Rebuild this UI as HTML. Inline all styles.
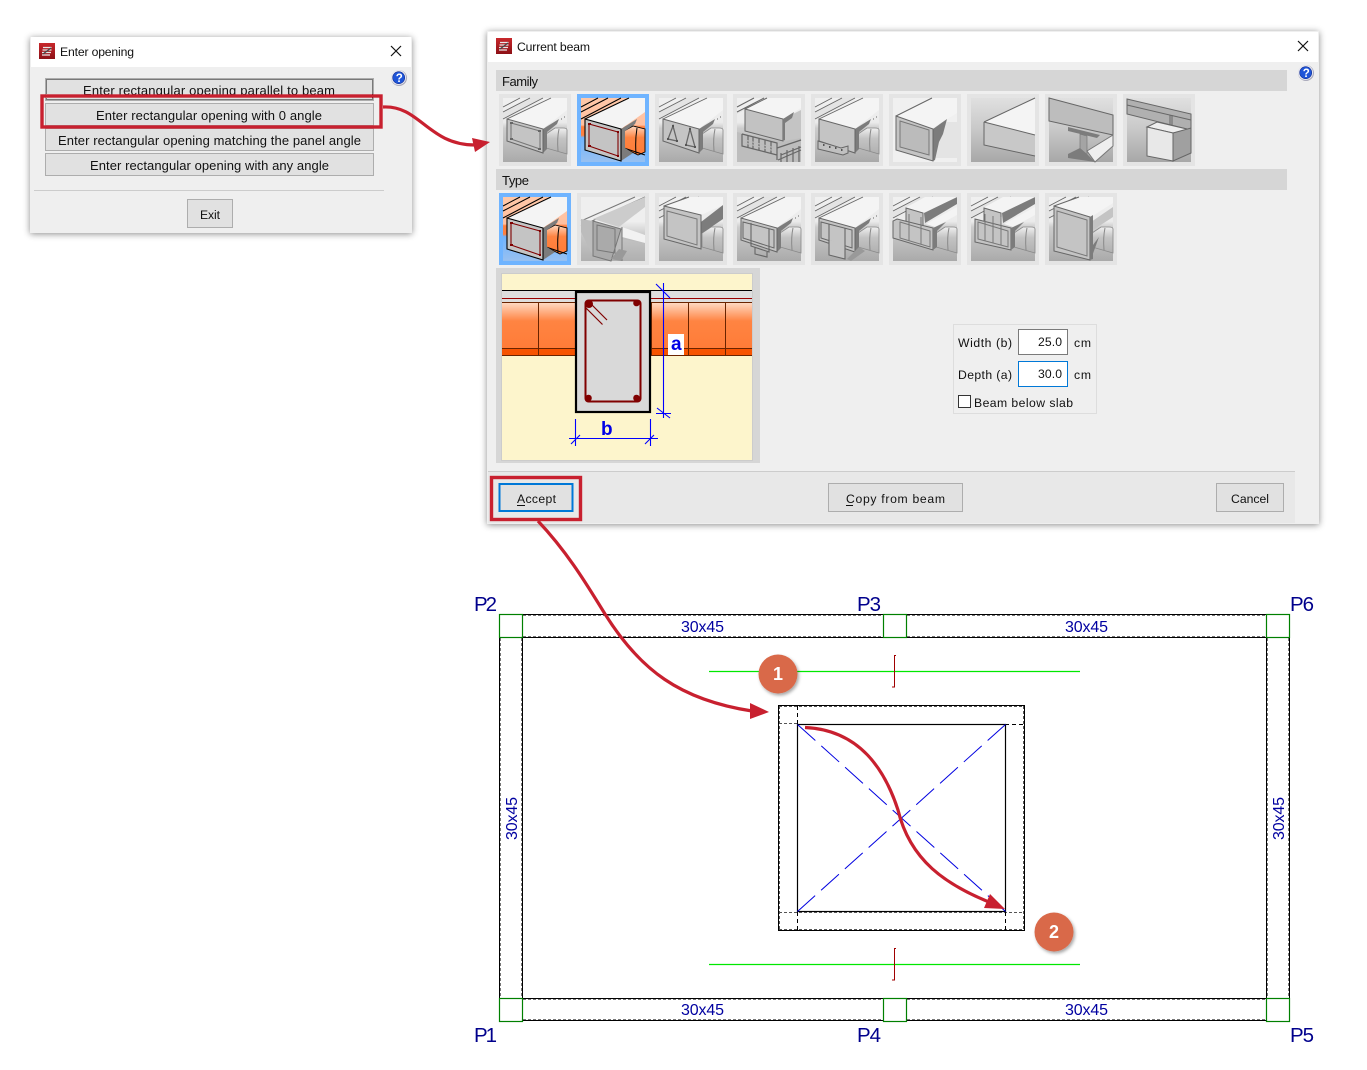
<!DOCTYPE html>
<html><head><meta charset="utf-8"><title>Opening</title>
<style>
html,body{margin:0;padding:0;background:#fff;width:1367px;height:1070px;overflow:hidden}
svg{display:block}
text{font-family:"Liberation Sans",sans-serif;font-size:13px;fill:#111}
.s{font-size:12.2px}
.p{font-size:20.5px;fill:#00008c}
.d{font-size:16px;fill:#0000a0}
</style></head><body>
<svg width="1367" height="1070" viewBox="0 0 1367 1070" xmlns="http://www.w3.org/2000/svg">
<defs>
<filter id="sh" x="-5%" y="-8%" width="110%" height="116%"><feDropShadow dx="0" dy="1" stdDeviation="3.5" flood-color="#000" flood-opacity=".45"/></filter>
<filter id="cs" x="-30%" y="-30%" width="170%" height="170%"><feDropShadow dx="1.5" dy="2" stdDeviation="1.5" flood-color="#000" flood-opacity=".35"/></filter>
<linearGradient id="bg" x1="0" y1="0" x2="0" y2="1"><stop offset="0" stop-color="#f0f0f0"/><stop offset=".38" stop-color="#ebebeb"/><stop offset=".47" stop-color="#cdcdcd"/><stop offset="1" stop-color="#aaa"/></linearGradient>
<linearGradient id="bg2" x1="0" y1="0" x2="0" y2="1"><stop offset="0" stop-color="#e0e0e0"/><stop offset=".5" stop-color="#c8c8c8"/><stop offset="1" stop-color="#a8a8a8"/></linearGradient>
<linearGradient id="bk" x1="0" y1="0" x2="0" y2="1"><stop offset="0" stop-color="#f0f0f0"/><stop offset=".4" stop-color="#c4c4c4"/><stop offset="1" stop-color="#b0b0b0"/></linearGradient>
<linearGradient id="sel" x1="0" y1="0" x2="0" y2="1"><stop offset="0" stop-color="#ffc8a8"/><stop offset=".42" stop-color="#ffc0a0"/><stop offset=".45" stop-color="#ff8040"/><stop offset=".58" stop-color="#ff8040"/><stop offset=".62" stop-color="#70b4ff"/><stop offset="1" stop-color="#98c0f0"/></linearGradient>
<linearGradient id="org" x1="0" y1="0" x2="0" y2="1"><stop offset="0" stop-color="#ffd8c0"/><stop offset=".4" stop-color="#ff8442"/><stop offset="1" stop-color="#ff7c38"/></linearGradient>
<linearGradient id="ic" x1="0" y1="0" x2="0" y2="1"><stop offset="0" stop-color="#c8282c"/><stop offset="1" stop-color="#8c1016"/></linearGradient>

<g id="icon"><rect width="16" height="16" fill="url(#ic)"/><path d="M4 4.5h8.5M3.5 7h9M3 9.5h9M3 12h8" stroke="#e8e8e8" stroke-width="1.2" fill="none"/><path d="M4 11l8-6" stroke="#444" stroke-width="1.2"/></g>
<g id="help"><circle r="8" fill="#aab" /><circle cx="-.5" cy="-.5" r="7.5" fill="#e8e8f0"/><circle cx="-.3" cy="-.3" r="6" fill="#1f55d8" stroke="#0c2a90" stroke-width=".6"/><text x="-3.3" y="4" style="font-size:11.5px;font-weight:700;fill:#fff">?</text></g>
<g id="xx"><path d="M-5 -5L5 5M5 -5L-5 5" stroke="#111" stroke-width="1.2"/></g>

<g id="base" stroke="#666" fill="none">
<rect width="64" height="64" fill="url(#bg)" stroke="none"/>
<polygon points="0,14 27,0 40,0 0,21" fill="#e4e4e4" stroke="none"/>
<path d="M0 14L27 0M0 9L17 0M0 21L40 0" stroke-width=".9"/>
<path d="M43,36 L52,30 H60 Q64,30 64,32 V56 L43,50Z" fill="url(#bk)" stroke="#888" stroke-width=".8"/>
<path d="M56,31 Q54,40 55,53" stroke="#888"/>
</g>
<g id="beamA" stroke="#666" fill="none">
<polygon points="40,31 56,21 54,26 44,34 44,51 40,55" fill="#7c7c7c" stroke="none"/>
<polygon points="4,21 48,0 64,0 64,12 40,31" fill="#f4f4f4" stroke="none"/>
<path d="M4,21L48,0M58,21h1M61,19h1" stroke-width=".9"/>
<polygon points="4,21 40,31 40,55 4,43" fill="#c4c4c4" stroke-width="1"/>
</g>
<g id="t1"><use href="#base"/><use href="#beamA"/><polygon points="8,25 37,33 37,51 8,41" fill="none" stroke="#777" stroke-width="1.1"/><path d="M7,25h3M35,33h3M7,41h3M35,51h3" stroke="#666" stroke-width="2"/></g>
<g id="t3"><use href="#base"/><use href="#beamA"/><path d="M9,41L14,28L18,43ZM27,47L31,31L36,49Z" fill="none" stroke="#666" stroke-width="1.3"/><path d="M8,41h2M17,43h2M26,47h2M35,49h2M13,28h2M30,31h2" stroke="#555" stroke-width="2"/></g>
<g id="t4"><rect width="64" height="64" fill="url(#bg)"/><polygon points="0,14 27,0 30,0 0,16" fill="#e4e4e4"/><path d="M0 14L27 0M0 9L17 0" stroke="#666" fill="none"/><polygon points="0,34 46,44 64,40 64,64 0,64" fill="#bdbdbd"/><polygon points="8,11 30,0 64,0 64,10 46,21" fill="#f4f4f4"/><path d="M8,11L30,0" stroke="#666"/><polygon points="8,11 46,21 46,43 8,33" fill="#c2c2c2" stroke="#666"/><polygon points="46,21 64,12 64,40 46,43" fill="#c4c4c4"/><polygon points="46,21 57,14 55,20 48,25 48,42 46,43" fill="#7c7c7c"/><path d="M5,36L40,45V62M5,36V48L40,57M11,38V50M16,39V51M22,40V52M28,42V54M34,44V56M40,50L64,42M41,62L64,52M44,55V64M50,52V64M56,50V64M62,48V64M44,57L64,49" stroke="#666" stroke-width="1.2" fill="none"/><path d="M8,42L38,50M8,45L38,53" stroke="#bbb"/></g>
<g id="t5"><use href="#base"/><use href="#beamA"/><polygon points="3,43 26,50 33,48 33,55 28,57 3,51" fill="#c0c0c0" stroke="#666"/><path d="M8,47h1.500M14,49h1.500M20,50h1.500M26,52h1.500" stroke="#555" stroke-width="2"/></g>
<g id="t6"><rect width="64" height="64" fill="#f0f0f0"/><path d="M46,24h18v36H42Z" fill="#e4e4e4"/><polygon points="3,18 39,0 64,0 64,15 38,31" fill="#f4f4f4"/><path d="M3,18L39,0" stroke="#666"/><polygon points="40,31 54,21 50,36 46,44 42,62 40,63" fill="#7c7c7c"/><polygon points="3,18 40,31 40,63 3,52" fill="#c4c4c4" stroke="#666"/><polygon points="7,23 36,32 36,57 7,49" fill="#bbb" stroke="#777"/></g>
<g id="t7"><rect width="64" height="64" fill="url(#bg2)"/><polygon points="13,24 64,0 64,37" fill="#f4f4f4"/><polygon points="13,24 64,37 64,58 13,47" fill="#c8c8c8"/><path d="M13,24L64,0M13,24L64,37M13,24V47L64,58" stroke="#666" fill="none"/></g>
<g id="t8"><rect width="64" height="64" fill="url(#bg2)"/><polygon points="0,0 64,17 64,37 0,23" fill="#bdbdbd" stroke="#666"/><polygon points="19,29 51,37 48,40 19,33" fill="#7c7c7c"/><polygon points="31,36 38,38 38,58 31,58" fill="#a4a4a4" stroke="#777" stroke-width=".7"/><polygon points="38,53 64,37 64,48 46,64" fill="#eee" stroke="#777"/><polygon points="19,56 31,50 38,56 46,64 19,60" fill="#7c7c7c"/></g>
<g id="t9"><rect width="64" height="64" fill="url(#bg2)"/><polygon points="0,1 64,16 64,32 0,16" fill="#b0b0b0" stroke="#666"/><path d="M0,7L64,22M43,17V30M45,17V30" stroke="#666" fill="none"/><polygon points="20,29 30,24 64,32 46,35" fill="#eee" stroke="#666"/><polygon points="20,29 46,35 46,63 20,58" fill="#e8e8e8" stroke="#666"/><polygon points="46,35 64,30 64,55 46,63" fill="#a0a0a0" stroke="#666"/></g>
<g id="sel1"><rect width="64" height="64" fill="url(#sel)"/><path d="M43,33 L52,28 L64,31 V54 L57,57 L43,50Z" fill="url(#org)" stroke="#000" stroke-width=".9"/><path d="M56,30Q54,42 55,56M43,50L64,57" stroke="#000" fill="none"/><path d="M0 14L27 0M0 9L17 0M0 21L40 0" stroke="#000"/><polygon points="40,31 56,21 54,26 44,33 44,50 52,55 40,63" fill="#7c7c7c"/><polygon points="4,21 48,0 64,0 64,14 40,31" fill="#f4f4f4"/><path d="M4,21L48,0" stroke="#000"/><polygon points="4,21 40,31 40,63 4,52" fill="#c4c4c4" stroke="#000" stroke-width="1.1"/><polygon points="8,26 37,34 37,58 8,48" fill="none" stroke="#800000" stroke-width="1.1"/><path d="M7,26h3M36,34h2M7,48h3M36,58h2" stroke="#800000" stroke-width="2"/></g>
<g id="b2"><rect width="64" height="64" fill="#efefef"/><rect y="24" width="64" height="40" fill="url(#bk)"/><path d="M0 24L54 0M0 29L64 0" stroke="#777"/><polygon points="12,22 64,0 64,10 38,30" fill="#ccc"/><polygon points="0,22 12,24 40,32 64,38 64,46 40,42 40,60 12,59 0,35" fill="#bcbcbc"/><polygon points="12,24 40,32 30,64 12,59" fill="#aaa" stroke="#777"/><polygon points="41,30 64,38 64,46 41,40" fill="#f2f2f2"/><path d="M41,30V64M16,28l18,4v24l-18,-3z" stroke="#777" fill="none"/><polygon points="30,62 38,52 46,54 40,64" fill="#999"/></g>
<g id="b3"><use href="#base"/><polygon points="42,25 64,8 64,22 42,37" fill="#7c7c7c"/><polygon points="5,9 30,0 64,0 64,8 42,18" fill="#f4f4f4"/><path d="M5,9L30,0" stroke="#666"/><polygon points="5,9 42,18 42,52 5,42" fill="#c4c4c4" stroke="#666"/><polygon points="8,14 38,22 38,48 8,39" fill="none" stroke="#777"/></g>
<g id="b4"><use href="#base"/><use href="#beamA"/><polygon points="6,25 37,33 37,51 6,41" fill="#c4c4c4" stroke="#666"/><path d="M14,26V49L32,55V32M18,50V57L30,60V55" stroke="#666" fill="none" stroke-width="1.1"/></g>
<g id="b5"><use href="#base"/><use href="#beamA"/><polygon points="6,25 37,33 37,51 6,41" fill="#c4c4c4" stroke="#666"/><path d="M14,27V44M30,31V48M14,43V58L30,62V47" stroke="#666" fill="#c4c4c4" stroke-width="1.1"/><polygon points="32,62 44,50 50,54 36,64" fill="#999"/></g>
<g id="b6"><use href="#base"/><polygon points="31,16 64,0 64,7 32,26" fill="#7c7c7c"/><polygon points="12,11 32,0 64,0 30,16" fill="#f4f4f4"/><polygon points="33,27 64,10 64,18 42,30" fill="#f4f4f4"/><polygon points="13,11 30,16 30,30 13,26" fill="#c4c4c4" stroke="#666"/><polygon points="4,22 40,31 40,53 0,41 0,24" fill="#c4c4c4" stroke="#666"/><path d="M7,25L37,34V50L7,41ZM16,17V44M28,20V47" stroke="#777" fill="none"/><polygon points="40,31 53,25 44,34 44,50 40,53" fill="#7c7c7c"/></g>
<g id="b7"><use href="#base"/><polygon points="31,16 64,0 64,7 32,26" fill="#7c7c7c"/><polygon points="12,11 32,0 64,0 30,16" fill="#f4f4f4"/><polygon points="33,27 64,10 64,18 42,30" fill="#f4f4f4"/><polygon points="13,11 30,16 30,30 13,26" fill="#c4c4c4" stroke="#666"/><polygon points="4,22 40,31 40,53 4,45" fill="#c4c4c4" stroke="#666"/><path d="M7,25L37,34V50L7,42ZM14,17V44M22,19V46M30,20V48" stroke="#777" fill="none"/><polygon points="40,31 53,25 44,34 44,50 40,53" fill="#7c7c7c"/></g>
<g id="b8"><use href="#base"/><polygon points="42,25 64,10 64,20 44,33 42,62" fill="#c4c4c4"/><polygon points="44,48 50,40 42,62" fill="#7c7c7c"/><polygon points="5,9 30,0 64,0 64,6 42,20" fill="#f4f4f4"/><path d="M5,9L30,0" stroke="#666"/><polygon points="5,9 41,20 41,63 5,54" fill="#c4c4c4" stroke="#666"/><polygon points="8,14 38,23 38,59 8,50" fill="none" stroke="#777"/><polygon points="41,20 44,18 44,62 41,63" fill="#7c7c7c"/></g>
</defs>

<!-- Dialog 1 -->
<g filter="url(#sh)"><rect x="30" y="37" width="382" height="196" fill="#efefef"/></g>
<rect x="31" y="37" width="380" height="30" fill="#fff"/>
<use href="#icon" x="39" y="43"/>
<text class="s" x="60" y="56" textLength="74">Enter opening</text>
<use href="#xx" x="396" y="51"/>
<use href="#help" x="399" y="78"/>
<g fill="#e1e1e1" stroke="#adadad">
<rect x="45.5" y="78.5" width="328" height="22"/><rect x="45.5" y="103.5" width="328" height="22"/><rect x="45.5" y="128.5" width="328" height="22"/><rect x="45.5" y="153.5" width="328" height="22"/>
</g>
<rect x="46.5" y="79.5" width="326" height="20" fill="none" stroke="#111" stroke-dasharray="1 1"/>
<text x="83" y="95" textLength="252">Enter rectangular opening parallel to beam</text>
<text x="96" y="120" textLength="226">Enter rectangular opening with 0 angle</text>
<text x="58" y="145" textLength="303">Enter rectangular opening matching the panel angle</text>
<text x="90" y="170" textLength="239">Enter rectangular opening with any angle</text>
<path d="M34 190.5H384" stroke="#ccc"/>
<rect x="187.5" y="199.5" width="45" height="28" fill="#e1e1e1" stroke="#adadad"/>
<text class="s" x="200" y="219" textLength="20">Exit</text>
<rect x="42" y="96" width="339" height="31" fill="none" stroke="#c8202f" stroke-width="3.400"/>

<!-- Dialog 2 -->
<g filter="url(#sh)"><rect x="487" y="31" width="832" height="493" fill="#efefef"/></g>
<rect x="488" y="32" width="830" height="30" fill="#fff"/>
<use href="#icon" x="496" y="38"/>
<text class="s" x="517" y="51" textLength="73">Current beam</text>
<use href="#xx" x="1303" y="46"/>
<use href="#help" x="1306" y="73"/>
<rect x="496" y="70" width="791" height="21" fill="#d6d6d6"/>
<rect x="496" y="169" width="791" height="21" fill="#d6d6d6"/>
<text x="502" y="86" textLength="36">Family</text>
<text x="502" y="185" textLength="27">Type</text>
<g fill="#e4e4e4">
<rect x="499" y="94" width="72" height="72"/><rect x="655" y="94" width="72" height="72"/><rect x="733" y="94" width="72" height="72"/><rect x="811" y="94" width="72" height="72"/><rect x="889" y="94" width="72" height="72"/><rect x="967" y="94" width="72" height="72"/><rect x="1045" y="94" width="72" height="72"/><rect x="1123" y="94" width="72" height="72"/>
<rect x="577" y="193" width="72" height="72"/><rect x="655" y="193" width="72" height="72"/><rect x="733" y="193" width="72" height="72"/><rect x="811" y="193" width="72" height="72"/><rect x="889" y="193" width="72" height="72"/><rect x="967" y="193" width="72" height="72"/><rect x="1045" y="193" width="72" height="72"/>
</g>
<rect x="577" y="94" width="72" height="72" fill="#6fb4ff"/><rect x="499" y="193" width="72" height="72" fill="#6fb4ff"/>
<use href="#t1" x="503" y="98"/><use href="#sel1" x="581" y="98"/><use href="#t3" x="659" y="98"/><use href="#t4" x="737" y="98"/><use href="#t5" x="815" y="98"/><use href="#t6" x="893" y="98"/><use href="#t7" x="971" y="98"/><use href="#t8" x="1049" y="98"/><use href="#t9" x="1127" y="98"/>
<use href="#sel1" x="503" y="197"/><use href="#b2" x="581" y="197"/><use href="#b3" x="659" y="197"/><use href="#b4" x="737" y="197"/><use href="#b5" x="815" y="197"/><use href="#b6" x="893" y="197"/><use href="#b7" x="971" y="197"/><use href="#b8" x="1049" y="197"/>

<!-- preview -->
<rect x="496" y="268" width="264" height="195" fill="#d6d6d6"/>
<rect x="501.5" y="273.5" width="251" height="187" fill="#fdf5cc" stroke="#ccc"/>
<rect x="502" y="290" width="250" height="13" fill="#dedede"/>
<rect x="502" y="303" width="250" height="45" fill="url(#org)"/>
<rect x="502" y="348" width="250" height="8" fill="#f65300"/>
<path d="M502 290.500H752" stroke="#000"/>
<path d="M502 298.500H752" stroke="#900"/>
<path d="M502 302.500H752M502 348.500H752M502 355.500H752M538.500 303V356M651.500 303V356M688.500 303V356M725.500 303V356" stroke="#6a2400"/>
<rect x="576" y="292" width="74" height="120" fill="#d9d9d9" stroke="#000" stroke-width="2.200"/>
<rect x="585.500" y="300.500" width="55" height="101" rx="3" fill="none" stroke="#800000" stroke-width="2"/>
<g fill="#800000"><circle cx="589" cy="304" r="4"/><circle cx="636.500" cy="303" r="3.300"/><circle cx="588.500" cy="398" r="3.300"/><circle cx="636.500" cy="398" r="3.300"/></g>
<path d="M590 303l17 17M586 308l16.500 16.500" stroke="#800000" stroke-width="1.200"/>
<g stroke="#0000ff" fill="none" stroke-width="1.100"><path d="M663.500 283V418M656 284l14 14M657 408l13 10M656 413.500H671M575.500 419V446M650.500 419V446M569 438.500H658M571 444l9-9M645 444l9-9"/></g>
<rect x="668" y="334" width="16" height="21" fill="#fff"/>
<text x="671" y="350" style="font-size:19px;font-weight:700;fill:#0000e6">a</text>
<text x="601" y="435" style="font-size:19px;font-weight:700;fill:#0000e6">b</text>

<!-- fields -->
<rect x="953.500" y="324.500" width="143" height="89" fill="none" stroke="#ddd"/>
<text class="s" x="958" y="347" textLength="54">Width (b)</text>
<text class="s" x="958" y="379" textLength="54">Depth (a)</text>
<rect x="1018.500" y="329.500" width="49" height="25" fill="#fff" stroke="#7a7a7a"/>
<rect x="1018.500" y="361.500" width="49" height="25" fill="#fff" stroke="#0078d7"/>
<text class="s" x="1038" y="346" textLength="24">25.0</text>
<text class="s" x="1038" y="378" textLength="24">30.0</text>
<text class="s" x="1074" y="347" textLength="17">cm</text>
<text class="s" x="1074" y="379" textLength="17">cm</text>
<rect x="958.500" y="395.500" width="12" height="12" fill="#fff" stroke="#333"/>
<text class="s" x="974" y="407" textLength="99">Beam below slab</text>

<!-- footer -->
<rect x="488" y="471" width="807" height="52" fill="#e8e8e8"/>
<path d="M488 471.500H1295" stroke="#ccc"/>
<rect x="499.500" y="484" width="73" height="27" fill="#e1e1e1" stroke="#0078d7" stroke-width="2"/>
<text class="s" x="517" y="503" textLength="39">Accept</text><path d="M517 505.500H525" stroke="#111"/>
<rect x="828.500" y="483.500" width="134" height="28" fill="#e1e1e1" stroke="#adadad"/>
<text class="s" x="846" y="503" textLength="99">Copy from beam</text><path d="M846 505.500H853" stroke="#111"/>
<rect x="1216.500" y="483.500" width="67" height="28" fill="#e1e1e1" stroke="#adadad"/>
<text class="s" x="1231" y="503" textLength="38">Cancel</text>
<rect x="491.500" y="477.500" width="89" height="42" fill="none" stroke="#c8202f" stroke-width="3.400"/>

<!-- plan -->
<g fill="none">
<g stroke="#777" stroke-dasharray="3 2"><path d="M523 615.500H883M907 615.500H1267M523 636.500H883M907 636.500H1267M523 1019.500H883M907 1019.500H1267M523 999.500H883M907 999.500H1267M500.500 638V998M521.500 638V998M1267.500 638V998M1288.500 638V998"/></g>
<g stroke="#000"><path d="M523 614.500H883M907 614.500H1267M523 637.500H883M907 637.500H1267M523 1020.500H883M907 1020.500H1267M523 998.500H883M907 998.500H1267M499.500 638V998M522.500 638V998M1266.500 638V998M1289.500 638V998"/></g>
<g stroke="#008000" stroke-width="1.200"><rect x="499.500" y="614.500" width="23" height="23"/><rect x="883.500" y="614.500" width="23" height="23"/><rect x="1266.500" y="614.500" width="23" height="23"/><rect x="499.500" y="998.500" width="23" height="23"/><rect x="883.500" y="998.500" width="23" height="23"/><rect x="1266.500" y="998.500" width="23" height="23"/></g>
<path d="M709 671.500H1080M709 964.500H1080" stroke="#00e800" stroke-width="1.200"/>
<path d="M896 655.500H894.500V687H892M896 948.500H894.500V980H892" stroke="#a00000"/>
<g stroke="#000"><rect x="778.500" y="705.500" width="246" height="225"/><rect x="797.500" y="724.500" width="208" height="187" stroke-width="1.200"/></g>
<g stroke="#555" stroke-dasharray="3 2"><path d="M779 706.500H1024M779 929.500H1024M779.500 706V930M1023.500 706V930M779 723.500H797M779 912.500H1024"/></g>
<path d="M797.500 706V724M797.500 912V930M1005.500 912V930M1005 724.500H1024" stroke="#000" stroke-dasharray="4 3"/>
<path d="M797.500 724.500L1005.500 911.500M1005.500 724.500L797.500 911.500" stroke="#0000e0" stroke-dasharray="24 8"/>
</g>
<text class="p" x="474" y="611" textLength="23">P2</text>
<text class="p" x="857" y="611" textLength="24">P3</text>
<text class="p" x="1290" y="611" textLength="24">P6</text>
<text class="p" x="474" y="1042" textLength="23">P1</text>
<text class="p" x="857" y="1042" textLength="24">P4</text>
<text class="p" x="1290" y="1042" textLength="24">P5</text>
<text class="d" x="681" y="632" textLength="43">30x45</text>
<text class="d" x="1065" y="632" textLength="43">30x45</text>
<text class="d" x="681" y="1015" textLength="43">30x45</text>
<text class="d" x="1065" y="1015" textLength="43">30x45</text>
<text class="d" transform="translate(517 840) rotate(-90)" textLength="43">30x45</text>
<text class="d" transform="translate(1284 840) rotate(-90)" textLength="43">30x45</text>

<!-- arrows -->
<g fill="none" stroke="#c8202f" stroke-width="3.200">
<path d="M383 107C420 105 428 145 475 145"/>
<path d="M538 521C570 555 590 590 605 614C640 670 680 700 752 711"/>
<path d="M805 727.500C860 730 885 770 898 810C910 860 945 885 994 904"/>
</g>
<g fill="#c8202f">
<polygon points="472,138 475,152 490,142"/>
<polygon points="750,703 750,719 769,712"/>
<polygon points="984,908 990,894 1005,909"/>
</g>
<g filter="url(#cs)"><circle cx="778" cy="674" r="19.500" fill="#d9694a"/></g>
<g filter="url(#cs)"><circle cx="1054" cy="932" r="19.500" fill="#d9694a"/></g>
<text x="773" y="680" style="font-size:18px;font-weight:700;fill:#fff">1</text>
<text x="1049" y="938" style="font-size:18px;font-weight:700;fill:#fff">2</text>
</svg>
</body></html>
